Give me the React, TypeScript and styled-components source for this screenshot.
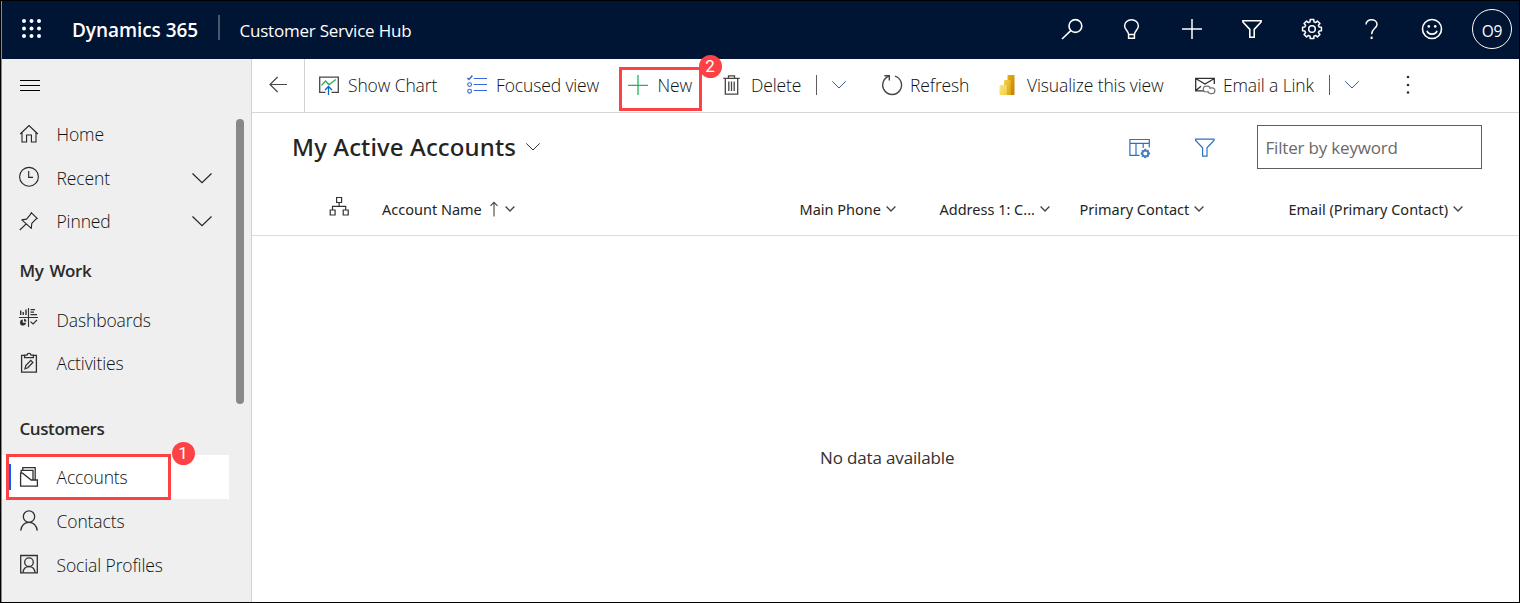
import React from 'react';
import styled, { createGlobalStyle } from 'styled-components';

const GlobalStyle = createGlobalStyle`
  *, *::before, *::after { box-sizing: border-box; }
  body { margin: 0; background: #fff; font-family: "Open Sans", "Noto Sans", sans-serif; color: #252423; }
  svg { display: block; flex: none; overflow: visible; }
`;

/* ---------- shell ---------- */

const Window = styled.div`
  width: 1520px;
  height: 603px;
  display: flex;
  flex-direction: column;
  border: 1px solid #000;
  overflow: hidden;
`;

const Frame = styled.div`
  flex: 1;
  min-height: 0;
  display: flex;
  flex-direction: column;
  border-left: 1px solid #8a8a8a;
`;

const TopBar = styled.header`
  height: 58px;
  flex: none;
  display: flex;
  align-items: flex-start;
  background: #001433;
  color: #fff;
`;

const Waffle = styled.div`
  width: 70px;
  padding: 18px 0 0 20px;
`;

const Brand = styled.div`
  width: 146px;
  padding-top: 16px;
  font-size: 19px;
  line-height: 26px;
  font-weight: 600;
  letter-spacing: -0.06px;
  white-space: nowrap;
`;

const BrandRule = styled.div`
  width: 2px;
  height: 25px;
  margin: 14px 19.5px 0 0;
  background: #4a586d;
`;

const AppName = styled.div`
  flex: 1;
  padding-top: 17px;
  font-size: 17px;
  line-height: 26px;
  letter-spacing: -0.22px;
`;

const TopActions = styled.nav`
  display: flex;
  height: 56px;
  margin-right: -3px;
`;

const TopAction = styled.div`
  width: 60px;
  display: flex;
  align-items: center;
  justify-content: center;
`;

const Avatar = styled.div`
  width: 40px;
  height: 40px;
  display: flex;
  align-items: center;
  justify-content: center;
  border: 1px solid #fff;
  border-radius: 50%;
  font-size: 15.5px;
  letter-spacing: -0.2px;
  padding-top: 3px;
`;

const Body = styled.div`
  flex: 1;
  min-height: 0;
  display: flex;
`;

/* ---------- sidebar ---------- */

const Sidebar = styled.aside`
  width: 250px;
  flex: none;
  display: flex;
  background: #efefef;
  border-right: 1px solid #d2d2d2;
`;

const SidebarList = styled.div`
  width: 227px;
`;

const Hamburger = styled.div`
  height: 53px;
  padding: 20px 0 0 17.5px;
`;

const NavRow = styled.div<{ $selected?: boolean }>`
  position: relative;
  height: ${(p) => (p.$selected ? 44 : 43.5)}px;
  display: flex;
  align-items: center;
  padding-left: 17px;
  background: ${(p) => (p.$selected ? '#fff' : 'transparent')};
`;

const NavLabel = styled.span`
  flex: 1;
  margin-left: 17.5px;
  padding-top: 0.8px;
  font-size: 17.5px;
  line-height: 24px;
  font-weight: 300;
  letter-spacing: -0.12px;
  color: #111;
`;

const NavChevron = styled.div`
  width: 20px;
  margin: 1px 17.5px 0 0;
`;

const GroupTitle = styled.div<{ $gap?: number }>`
  height: ${(p) => (p.$gap ? 53 : 55)}px;
  margin-top: ${(p) => p.$gap ?? 0}px;
  padding-left: 17.5px;
  display: flex;
  align-items: center;
  font-size: 17px;
  font-weight: 600;
  letter-spacing: -0.42px;
  word-spacing: 2px;
  color: #2b2a29;
`;

const SelectedMark = styled.div`
  position: absolute;
  left: 7px;
  top: 9px;
  width: 2px;
  height: 26px;
  background: #0b5cff;
`;

const ScrollThumb = styled.div`
  width: 8px;
  height: 285px;
  margin: 60px 0 0 7px;
  border-radius: 4px;
  background: #888;
`;

/* ---------- numbered callouts ---------- */

const CalloutBox = styled.div<{ $x: number; $y: number; $w: number; $h: number }>`
  position: absolute;
  left: ${(p) => p.$x}px;
  top: ${(p) => p.$y}px;
  width: ${(p) => p.$w}px;
  height: ${(p) => p.$h}px;
  border: 3px solid #fd4144;
`;

const CalloutNumber = styled.div<{ $out: number }>`
  position: absolute;
  right: -${(p) => p.$out}px;
  top: -15px;
  width: 23px;
  height: 23px;
  display: flex;
  align-items: center;
  justify-content: center;
  border-radius: 50%;
  background: #fd4144;
  color: #fff;
  font: 400 17px/23px Roboto, sans-serif;
`;

/* ---------- main area ---------- */

const Main = styled.main`
  flex: 1;
  min-width: 0;
  display: flex;
  flex-direction: column;
  background: #fff;
`;

const CommandBar = styled.div`
  height: 54px;
  flex: none;
  display: flex;
  border-bottom: 1px solid #d6d6d6;
`;

const BackCell = styled.div`
  width: 53px;
  padding: 17px 0 0 17px;
  border-right: 1px solid #d2d2d2;
  margin-right: 14px;
`;

const Command = styled.div<{ $w: number; $gap?: number }>`
  position: relative;
  width: ${(p) => p.$w}px;
  height: 52px;
  flex: none;
  display: flex;
  align-items: center;
  gap: ${(p) => p.$gap ?? 9}px;
`;

const CommandLabel = styled.span`
  font-size: 17.5px;
  line-height: 24px;
  font-weight: 300;
  letter-spacing: -0.13px;
  color: #111;
  white-space: nowrap;
`;

const Split = styled.div<{ $w: number }>`
  width: ${(p) => p.$w}px;
  height: 52px;
  flex: none;
  display: flex;
  align-items: center;
  gap: 15px;
`;

const SplitRule = styled.div`
  width: 1px;
  height: 20px;
  background: #605e5c;
`;

const ViewBar = styled.div`
  height: 71px;
  flex: none;
  display: flex;
  padding: 12px 37px 0 40px;
`;

const ViewTitle = styled.h1`
  flex: 1;
  display: flex;
  align-items: center;
  gap: 11px;
  height: 44px;
  margin: 0;
  font-family: "Noto Sans", "Open Sans", sans-serif;
  font-size: 24px;
  line-height: 32px;
  font-weight: 500;
  letter-spacing: 0.13px;
`;

const TitleText = styled.span`
  width: 223px;
  white-space: nowrap;
`;

const ViewTool = styled.div<{ $w: number }>`
  width: ${(p) => p.$w}px;
  height: 45px;
  display: flex;
  align-items: center;
`;

const FilterBox = styled.div`
  width: 225px;
  height: 44px;
  padding: 0 0 0 7.5px;
  display: flex;
  align-items: center;
  border: 1px solid #605e5c;
  font-size: 17px;
  letter-spacing: -0.18px;
  color: #6b6967;
`;

const ColumnHeads = styled.div`
  height: 52px;
  flex: none;
  display: grid;
  grid-template-columns: 52.5px 417.5px 140px 140px 209px auto;
  padding-left: 77.5px;
  border-bottom: 1px solid #dcdcdc;
`;

const ColumnHead = styled.div`
  display: flex;
  align-items: center;
  height: 50px;
  gap: 5px;
  font-family: "Noto Sans", "Open Sans", sans-serif;
  font-size: 14.5px;
  font-weight: 450;
  letter-spacing: 0;
  color: #252423;
  white-space: nowrap;
`;

const SortMark = styled.div`
  margin: 0 2px 0 3.5px;
`;

const HeadIcon = styled.div`
  padding-top: 12px;
`;

const EmptyState = styled.div`
  flex: 1;
  padding: 208.5px 0 0 568px;
  font-size: 17px;
  line-height: 26px;
  letter-spacing: -0.15px;
  color: #323130;
`;

/* ---------- icons ---------- */

type IconProps = { w?: number; h?: number; color?: string; sw?: number; children: React.ReactNode };

const Icon = ({ w = 20, h = 20, color = '#252423', sw = 1.2, children }: IconProps) => (
  <svg width={w} height={h} viewBox={`0 0 ${w} ${h}`} fill="none" stroke={color} strokeWidth={sw}>
    {children}
  </svg>
);

const WaffleIcon = () => (
  <Icon color="none">
    {[2, 9.5, 17].map((y) => [2, 9.5, 17].map((x) => <circle key={`${x}-${y}`} cx={x} cy={y} r="2" fill="#fff" />))}
  </Icon>
);
const SearchIcon = () => (
  <Icon w={22} color="#fff" sw={1.6}><circle cx="14.4" cy="7" r="6.4" /><path d="M10 11.4 1 20" /></Icon>
);
const BulbIcon = () => (
  <Icon w={16} color="#fff" sw={1.5}>
    <path d="M4.6 15.6C4.6 11.8 .6 10.6 .6 6.9A6.9 6.2 0 0 1 14.4 6.9C14.4 10.6 10.4 11.8 10.4 15.6V19.3H4.6V15.6H10.4" />
  </Icon>
);
const TopPlusIcon = () => <Icon color="#fff" sw={1.5}><path d="M10 0V20M0 10H20" /></Icon>;
const TopFunnelIcon = () => (
  <Icon color="#fff" sw={1.6}><path d="M.9 1.8H19.1V3L12.2 10.4V18.3H7.8V10.4L.9 3Z" /></Icon>
);
const gearPath = (cx: number, cy: number, inner: number, outer: number) => {
  const pts: string[] = [];
  for (let i = 0; i < 8; i++) {
    const a = (i * Math.PI) / 4;
    [[-0.27, inner], [-0.19, outer], [0.19, outer], [0.27, inner]].forEach(([d, r]) =>
      pts.push(`${(cx + r * Math.sin(a + d)).toFixed(2)} ${(cy - r * Math.cos(a + d)).toFixed(2)}`));
  }
  return `M${pts.join('L')}Z`;
};
const GearIcon = () => (
  <Icon color="#fff" sw={1.5}>
    <path d={gearPath(10, 10, 7.4, 9.6)} strokeLinejoin="round" /><circle cx="10" cy="10" r="3.3" />
  </Icon>
);
const HelpIcon = () => (
  <Icon w={12} color="#fff" sw={1.5}>
    <path d="M0 5.6C0 2.6 2.4 .8 5.5 .8S11 2.7 11 5.4C11 9.2 5.6 9.6 5.6 15.2" />
    <path d="M5.6 17.6V20" strokeWidth="2" />
  </Icon>
);
const SmileIcon = () => (
  <Icon color="#fff" sw={1.6}>
    <circle cx="10" cy="10" r="9.5" /><path d="M5 11.8C6.2 16.2 13.8 16.2 15 11.8" />
    <circle cx="6.8" cy="7.4" r="1.3" fill="#fff" stroke="none" /><circle cx="13.2" cy="7.4" r="1.3" fill="#fff" stroke="none" />
  </Icon>
);
const HamburgerIcon = () => (
  <Icon h={14} color="#000"><path d="M0 1.5H20M0 6.5H20M0 11.5H20" strokeWidth="1" /></Icon>
);
const HomeIcon = () => (
  <Icon sw={1.1}><path d="M1.2 10 10 1.6 18.8 10M3 8.5V18H7.6V11H12.4V18H17V8.5" /></Icon>
);
const ClockIcon = () => <Icon sw={1.1}><circle cx="10" cy="9.8" r="9.4" /><path d="M9.7 4V10.4H14" /></Icon>;
const PinIcon = () => (
  <Icon sw={1.1}>
    <path d="M12.2 1.6 18.4 7.6 16.9 8.1 12.8 12.4 12.3 17.4 2.8 8.9 7.6 8.1 11.5 3.4ZM7.2 12.8.8 19" strokeLinejoin="round" />
  </Icon>
);
const DashboardIcon = () => (
  <Icon color="#323130">
    <path d="M0 8.5H19M9.5 -1V18" strokeWidth="1.1" />
    <path d="M1.7 1.5V6M4.2 3V6M7 .5V6" strokeWidth="1.4" />
    <path d="M11.5 .6H16M11.5 3.1H15M11.5 5.6H18" strokeWidth="1.2" />
    <path d="M3.8 10.6V13.8H7A3 3 0 1 1 3.8 10.6Z" fill="#323130" stroke="none" />
    <path d="M5 9.8A3 3 0 0 1 7.6 12.4H5Z" fill="#323130" stroke="none" />
    <path d="M11.5 12.6 14 15 18 11" />
  </Icon>
);
const ActivityIcon = () => (
  <Icon color="#323130" sw={1.3}>
    <path d="M5.5 2.3H2.6V19.2H17.4V2.3H14.5" /><path d="M5.6 4.7V2.1H8C8.2 -.3 11.8 -.3 12 2.1H14.4V4.7Z" />
    <path d="M6 15.8 6.8 12.6 11.8 7.4 13.8 9.4 8.8 14.8Z" />
  </Icon>
);
const AccountIcon = () => (
  <Icon color="#323130" sw={1.3}>
    <path d="M1.6 6.2H3.6L12.2 13H18.4V19.2H1.6Z" /><path d="M2.2 6V3.4H14V13M3.8 3.2V.7H16.2V13" />
  </Icon>
);
const ContactIcon = () => (
  <Icon h={21} color="#323130" sw={1.3}><circle cx="10" cy="6.6" r="5.7" /><path d="M1.7 20.6C2.2 15.4 5.8 12.4 10 12.4S17.8 15.4 18.3 20.6" /></Icon>
);
const SocialIcon = () => (
  <Icon color="#323130" sw={1.3}>
    <path d="M1.7 1.5H18.3V18.8H1.7Z" /><circle cx="10" cy="8.2" r="4.3" /><path d="M4 18.8C4.2 15 6.4 12.6 10 12.6S15.8 15 16 18.8" />
  </Icon>
);
const WideChevron = () => <Icon h={10} sw={1.2}><path d="M.5 .5 10 9.7 19.5 .5" /></Icon>;
const Chevron = ({ color = '#323130' }: { color?: string }) => (
  <Icon w={14} h={8} color={color} sw={1}><path d="M.3 .4 7 7 13.7 .4" /></Icon>
);
const SmallChevron = () => <Icon w={10} h={7} color="#484644" sw={1.4}><path d="M.6 .6 5 4.9 9.4 .6" /></Icon>;
const BackIcon = () => <Icon h={18} w={18} color="#484644" sw={1.2}><path d="M8.6 1 1 8.5l7.6 7.5M1 8.5H18" /></Icon>;
const ChartIcon = () => (
  <Icon color="#484644" sw={1.3}>
    <path d="M6.5 17.4H.7V2.1H19.3V17.4H12.5" />
    <path d="M2.5 10.2 6.6 6 10 9.8 16.8 4.6" stroke="#27ae60" />
    <path d="M9.5 20V11.6M6 15 9.5 11.5 13 15" stroke="#1068bf" />
  </Icon>
);
const FocusIcon = () => (
  <Icon color="#3a66db" sw={1.1}>
    <path d="M6.8 3.5H20M6.8 9.5H20M6.8 15.5H20" /><path d="M.3 3 2 4.5 5.4 .5" strokeWidth="1.5" />
    <circle cx="2.6" cy="9.6" r="1.9" /><circle cx="2.6" cy="16.2" r="1.9" />
  </Icon>
);
const NewIcon = () => <Icon color="#27ae60" sw={1.3}><path d="M10 0V20M0 10.3H20" /></Icon>;
const DeleteIcon = () => (
  <Icon w={17} color="#484644" sw={1.3}>
    <path d="M.3 3.4H16.7M5.5 3.2V.8H11.5V3.2M2.3 3.4V19.2H14.7V3.4M5.8 6.4V16M8.5 6.4V16M11.2 6.4V16" />
  </Icon>
);
const RefreshIcon = () => (
  <Icon color="#484644" sw={1.4}>
    <path d="M13 1.1A9.4 9.4 0 1 1 7 1.2" /><path d="M2.4 .8H7.3V5.6" />
  </Icon>
);
const PowerBiIcon = () => (
  <svg width="16" height="20" viewBox="0 0 16 20">
    <defs>
      <linearGradient id="tall" x1="0" y1="0" x2="1" y2="1"><stop offset="0" stopColor="#e8b412" /><stop offset="1" stopColor="#c47c07" /></linearGradient>
      <linearGradient id="mid" x1="0" y1="0" x2="1" y2="1"><stop offset="0" stopColor="#f5d250" /><stop offset="1" stopColor="#dba40f" /></linearGradient>
      <linearGradient id="low" x1="0" y1="0" x2="1" y2="1"><stop offset="0" stopColor="#fae58c" /><stop offset="1" stopColor="#f2ce3e" /></linearGradient>
    </defs>
    <rect x="7.5" y="0" width="7" height="20" rx=".7" fill="url(#tall)" />
    <path d="M4.2 5H10A.7 .7 0 0 1 10.7 5.7V20H3.5Z" fill="url(#mid)" />
    <path d="M.2 10H6A.8 .8 0 0 1 6.8 10.8V20H.2A.7 .7 0 0 1-.5 19.3V10.7Z" fill="url(#low)" />
  </svg>
);
const EmailIcon = () => (
  <Icon color="#323130" sw={1.3}>
    <path d="M9 15.8H.7V3.3H19.3V9M1 3.7 10 9 19 3.7M.8 15.5 6 11.3" />
    <path d="M12.8 17H11.2A2.9 2.9 0 0 1 11.2 11.2H12.6A2.9 2.9 0 0 1 15.2 14M15.4 12.8H17A2.9 2.9 0 0 1 17 18.6H15.4A2.9 2.9 0 0 1 12.8 15.8" stroke="#797775" strokeWidth="1.2" />
  </Icon>
);
const MoreIcon = () => (
  <svg width="3" height="20" viewBox="0 0 3 20">
    {[2, 10, 17.5].map((y) => <circle key={y} cx="2" cy={y} r="1.3" fill="#323130" />)}
  </svg>
);
const EditColumnsIcon = () => (
  <Icon w={22} color="#2b72c2" sw={1.2}>
    <path d="M10.5 17.3H.9V1.5H20.3V9.5M.9 5.3H20.3M7 5.3V17.3M14.2 5.3V10" />
    <path d={gearPath(16.3, 15.5, 2.7, 4.3)} strokeWidth=".8" fill="#2b72c2" /><circle cx="16.3" cy="15.5" r="2" fill="#fff" stroke="none" />
  </Icon>
);
const FunnelIcon = () => <Icon color="#2b72c2" sw={1.2}><path d="M.6 1.2H19V2.4L12 9.8V18.2H7.6V9.8L.6 2.4Z" /></Icon>;
const HierarchyIcon = () => (
  <Icon w={20} color="#323130" sw={1.2}>
    <path d="M6.6 1.5H11.6V6.5H6.6ZM9.1 6.5V10.4M2.5 13.9V10.4H15.7V13.9M.2 14H5.1V19H.2ZM13.2 14H18.2V19H13.2Z" />
  </Icon>
);
const SortUpIcon = () => <Icon w={8} h={15} color="#484644" sw={1.1}><path d="M4 14.5V.5M.5 3.9 4 .4 7.5 3.9" /></Icon>;

/* ---------- page ---------- */

const topIcons = [SearchIcon, BulbIcon, TopPlusIcon, TopFunnelIcon, GearIcon, HelpIcon, SmileIcon];

export default function App() {
  return (
    <>
      <GlobalStyle />
      <Window>
        <Frame>
          <TopBar>
            <Waffle><WaffleIcon /></Waffle>
            <Brand>Dynamics 365</Brand>
            <BrandRule />
            <AppName>Customer Service Hub</AppName>
            <TopActions>
              {topIcons.map((Glyph, i) => <TopAction key={i}><Glyph /></TopAction>)}
              <TopAction><Avatar>O9</Avatar></TopAction>
            </TopActions>
          </TopBar>
          <Body>
            <Sidebar>
              <SidebarList>
                <Hamburger><HamburgerIcon /></Hamburger>
                <NavRow><HomeIcon /><NavLabel>Home</NavLabel></NavRow>
                <NavRow><ClockIcon /><NavLabel>Recent</NavLabel><NavChevron><WideChevron /></NavChevron></NavRow>
                <NavRow><PinIcon /><NavLabel>Pinned</NavLabel><NavChevron><WideChevron /></NavChevron></NavRow>
                <GroupTitle>My Work</GroupTitle>
                <NavRow><DashboardIcon /><NavLabel>Dashboards</NavLabel></NavRow>
                <NavRow><ActivityIcon /><NavLabel>Activities</NavLabel></NavRow>
                <GroupTitle $gap={17.5}>Customers</GroupTitle>
                <NavRow $selected>
                  <SelectedMark />
                  <AccountIcon /><NavLabel>Accounts</NavLabel>
                  <CalloutBox $x={4} $y={-1} $w={165} $h={46}><CalloutNumber $out={26.5}>1</CalloutNumber></CalloutBox>
                </NavRow>
                <NavRow><ContactIcon /><NavLabel>Contacts</NavLabel></NavRow>
                <NavRow><SocialIcon /><NavLabel>Social Profiles</NavLabel></NavRow>
              </SidebarList>
              <ScrollThumb />
            </Sidebar>
            <Main>
              <CommandBar>
                <BackCell><BackIcon /></BackCell>
                <Command $w={148}><ChartIcon /><CommandLabel>Show Chart</CommandLabel></Command>
                <Command $w={161}><FocusIcon /><CommandLabel>Focused view</CommandLabel></Command>
                <Command $w={95} $gap={9.5}>
                  <NewIcon /><CommandLabel>New</CommandLabel>
                  <CalloutBox $x={-9} $y={8} $w={83} $h={44}><CalloutNumber $out={22.5}>2</CalloutNumber></CalloutBox>
                </Command>
                <Command $w={93} $gap={11}><DeleteIcon /><CommandLabel>Delete</CommandLabel></Command>
                <Split $w={66}><SplitRule /><Chevron color="#3b5a9a" /></Split>
                <Command $w={118} $gap={8}><RefreshIcon /><CommandLabel>Refresh</CommandLabel></Command>
                <Command $w={195} $gap={11}><PowerBiIcon /><CommandLabel>Visualize this view</CommandLabel></Command>
                <Command $w={134} $gap={8}><EmailIcon /><CommandLabel>Email a Link</CommandLabel></Command>
                <Split $w={77}><SplitRule /><Chevron color="#3b5a9a" /></Split>
                <Command $w={10}><MoreIcon /></Command>
              </CommandBar>
              <ViewBar>
                <ViewTitle><TitleText>My Active Accounts</TitleText><Chevron /></ViewTitle>
                <ViewTool $w={66}><EditColumnsIcon /></ViewTool>
                <ViewTool $w={62}><FunnelIcon /></ViewTool>
                <FilterBox>Filter by keyword</FilterBox>
              </ViewBar>
              <ColumnHeads>
                <HeadIcon><HierarchyIcon /></HeadIcon>
                <ColumnHead>Account Name<SortMark><SortUpIcon /></SortMark><SmallChevron /></ColumnHead>
                <ColumnHead>Main Phone<SmallChevron /></ColumnHead>
                <ColumnHead>Address 1: C...<SmallChevron /></ColumnHead>
                <ColumnHead>Primary Contact<SmallChevron /></ColumnHead>
                <ColumnHead>Email (Primary Contact)<SmallChevron /></ColumnHead>
              </ColumnHeads>
              <EmptyState>No data available</EmptyState>
            </Main>
          </Body>
        </Frame>
      </Window>
    </>
  );
}
